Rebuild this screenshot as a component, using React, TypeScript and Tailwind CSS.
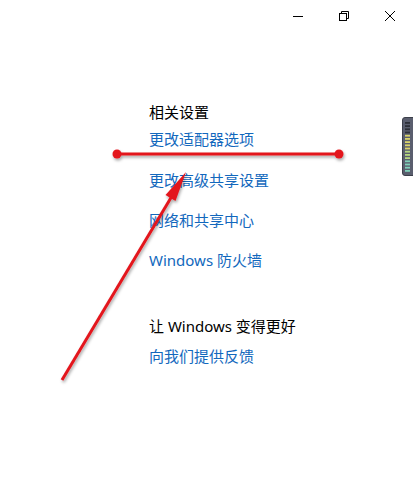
import type { ReactNode } from 'react';

const font = { fontFamily: '"Noto Sans", "Noto Sans CJK SC", sans-serif' };

function CaptionButton({ children }: { children: ReactNode }) {
  return (
    <button className="flex h-8 w-[46px] items-center justify-center text-black">
      {children}
    </button>
  );
}

function LinkRow({ children, className = '' }: { children: ReactNode; className?: string }) {
  return (
    <a className={`block text-[15px] leading-5 text-[#1268bd] ${className}`}>{children}</a>
  );
}

function Meter() {
  const bars = Array.from({ length: 16 }, (_, i) => i);
  const colour = (i: number) => {
    if (i < 4) return '#2d3038';
    if (i < 9) return '#d9d36a';
    if (i < 12) return '#b6d680';
    return '#7fd0b8';
  };
  return (
    <svg className="absolute right-0 top-[117px]" width="11" height="60" viewBox="0 0 11 60">
      <rect x="0.5" y="0.5" width="14" height="58" rx="2.5" fill="#5a5e6e" stroke="#3c3f4a" />
      {bars.map((i) => (
        <rect key={i} x="3" y={5 + i * 3.2} width="5" height="1.8" fill={colour(i)} />
      ))}
    </svg>
  );
}

function Annotations() {
  return (
    <svg className="pointer-events-none absolute inset-0" width="413" height="489" viewBox="0 0 413 489">
      <defs>
        <filter id="shade" x="-10%" y="-50%" width="120%" height="300%">
          <feDropShadow dx="1" dy="2" stdDeviation="1.6" floodColor="#000" floodOpacity="0.35" />
        </filter>
      </defs>
      <g filter="url(#shade)" fill="#e3141c" stroke="#e3141c">
        <line x1="117" y1="154" x2="339" y2="154" strokeWidth="3" />
        <circle cx="117" cy="154" r="4.5" stroke="none" />
        <circle cx="339" cy="154" r="4.5" stroke="none" />
        <line x1="62" y1="380" x2="172" y2="196" strokeWidth="3" />
        <polygon points="186,172 175.5,201 165.5,195" stroke="none" />
      </g>
    </svg>
  );
}

export default function App() {
  return (
    <div className="relative h-[489px] w-[413px] overflow-hidden bg-white" style={font}>
      <div className="flex justify-end">
        <CaptionButton>
          <svg width="10" height="10" viewBox="0 0 10 10">
            <line x1="0" y1="5.5" x2="10" y2="5.5" stroke="#000" strokeWidth="1" />
          </svg>
        </CaptionButton>
        <CaptionButton>
          <svg width="10" height="10" viewBox="0 0 10 10" fill="none" stroke="#000" strokeWidth="1">
            <rect x="0.5" y="2.5" width="7" height="7" />
            <path d="M2.5 2.5V0.5H9.5V7.5H7.5" />
          </svg>
        </CaptionButton>
        <CaptionButton>
          <svg width="10" height="10" viewBox="0 0 10 10" stroke="#000" strokeWidth="1">
            <line x1="0" y1="0" x2="10" y2="10" />
            <line x1="10" y1="0" x2="0" y2="10" />
          </svg>
        </CaptionButton>
      </div>

      <div className="pl-[149px] pt-[70px]">
        <h2 className="text-[15px] leading-5 text-black">相关设置</h2>
        <LinkRow className="mt-[7px]">更改适配器选项</LinkRow>
        <LinkRow className="mt-[21px]">更改高级共享设置</LinkRow>
        <LinkRow className="mt-[20px]">网络和共享中心</LinkRow>
        <LinkRow className="mt-[20px]">Windows 防火墙</LinkRow>

        <h2 className="mt-[46px] text-[15px] leading-5 text-black">让 Windows 变得更好</h2>
        <LinkRow className="mt-[10px]">向我们提供反馈</LinkRow>
      </div>

      <Meter />
      <Annotations />
    </div>
  );
}
